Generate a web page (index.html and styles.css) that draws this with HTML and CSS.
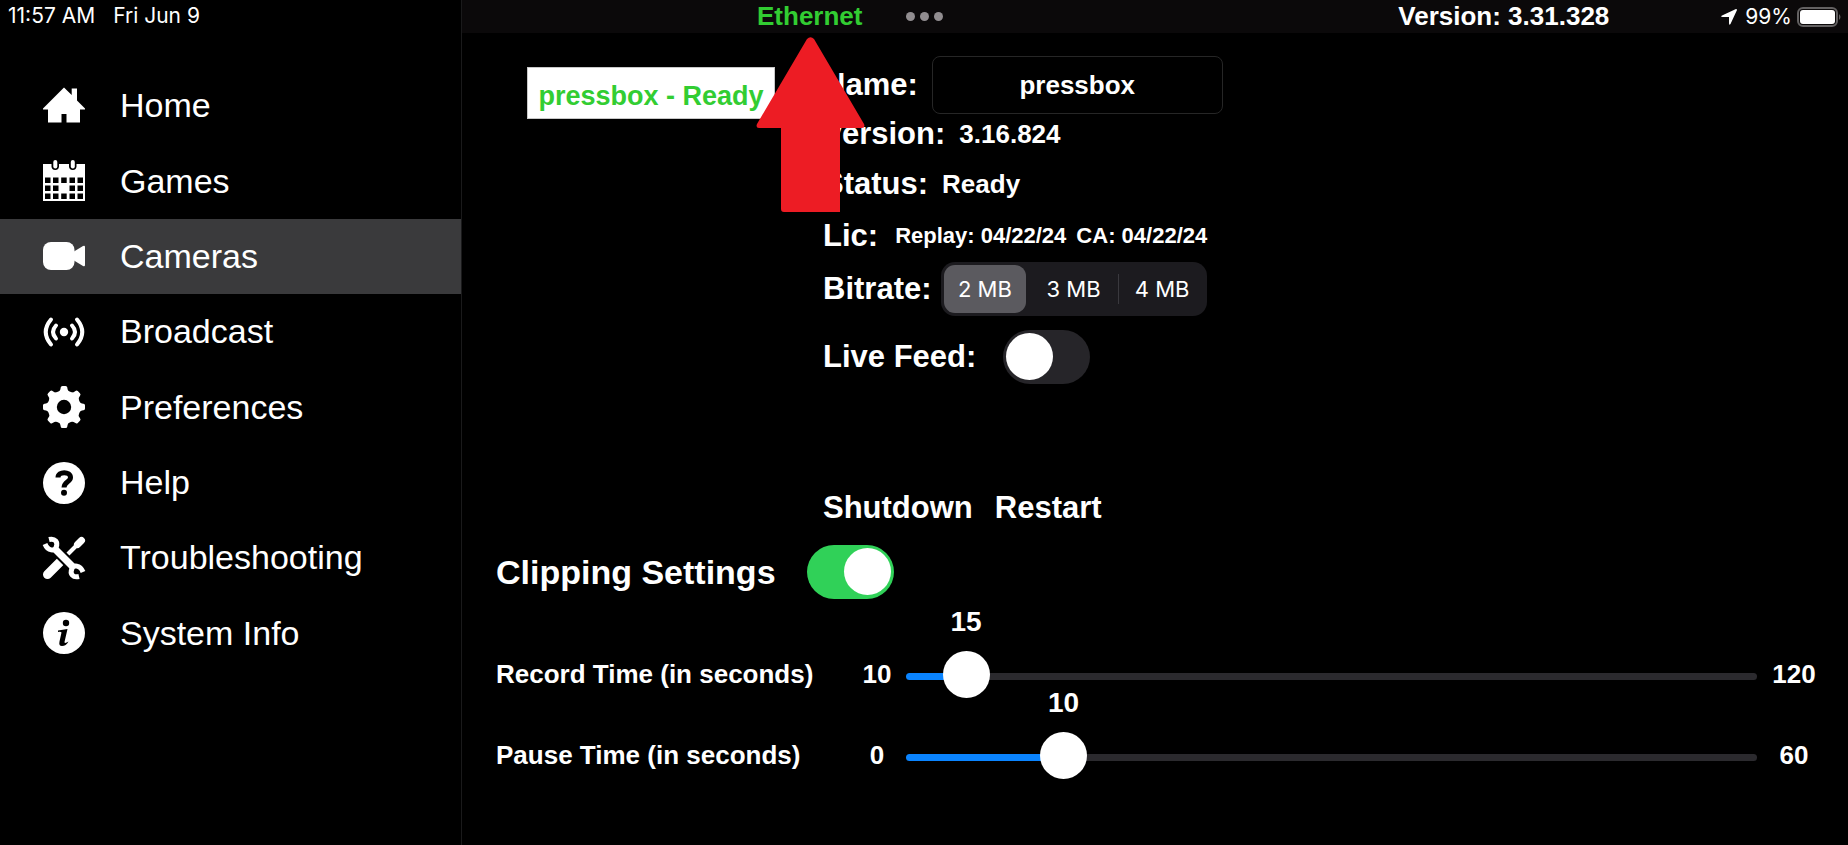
FILE: index.html
```html
<!DOCTYPE html>
<html lang="en">
<head>
    <meta charset="UTF-8">
    <meta name="viewport" content="width=device-width, initial-scale=1.0">
    <title>Cameras</title>
    <link rel="stylesheet" href="styles.css">
</head>
<body>
    <div class="app">
        <aside class="sidebar">
            <div class="clock"><span>11:57 AM</span><span>Fri Jun 9</span></div>
            <nav class="menu">
                <a href="#home">
                    <svg class="icon" viewBox="0 0 42 42"><path d="M21 2.500 28.700 10V3.500H34V15.500L42 23.500V24.500H37V37.500H23.500V29H18.500V37.500H5V24.500H0V23.500Z"/></svg>
                    Home
                </a>
                <a href="#games">
                    <svg class="icon" viewBox="0 0 42 42">
                        <rect y="4" width="42" height="37"/>
                        <path class="cut" d="M2 17.500h5.500V23H2zM10 17.500h5.500V23H10zM18.200 17.500h5.500V23h-5.500zM26.500 17.500H32V23h-5.500zM34.500 17.500H40V23h-5.500zM2 25.500h5.500V31H2zM10 25.500h5.500V31H10zM26.500 25.500H32V31h-5.500zM34.500 25.500H40V31h-5.500zM2 33.500h5.500V39H2zM10 33.500h5.500V39H10zM18.200 33.500h5.500V39h-5.500zM26.500 33.500H32V39h-5.500zM34.500 33.500H40V39h-5.500z"/>
                        <rect class="cut" x="8.500" y="-3" width="7.500" height="13" rx="3.700"/>
                        <rect class="cut" x="26" y="-3" width="7.500" height="13" rx="3.700"/>
                        <rect x="10.300" y="0" width="4" height="8.500" rx="2"/>
                        <rect x="27.800" y="0" width="4" height="8.500" rx="2"/>
                    </svg>
                    Games
                </a>
                <a href="#cameras" class="active">
                    <svg class="icon" viewBox="0 0 42 42"><rect y="7" width="31.500" height="28" rx="8"/><path d="M31 16.500 40 11Q42 10 42 12V30Q42 32 40 31L31 25.500Z"/></svg>
                    Cameras
                </a>
                <a href="#broadcast">
                    <svg class="icon" viewBox="0 0 42 42">
                        <circle cx="21" cy="21" r="4.200"/>
                        <g class="line"><path d="M13 14.500Q7 21 13 27.500M29 14.500Q35 21 29 27.500"/><path d="M8 8.500Q-2.500 21 8 33.500M34 8.500Q44.500 21 34 33.500"/></g>
                    </svg>
                    Broadcast
                </a>
                <a href="#preferences">
                    <svg class="icon" viewBox="0 0 42 42">
                        <circle cx="21" cy="21" r="16.500"/>
                        <path id="tooth" d="M14.500 6.500Q17.500 5 17.700 1.500Q17.800 0 19.500 0H22.500Q24.200 0 24.300 1.500Q24.500 5 27.500 6.500V35.500Q24.500 37 24.300 40.500Q24.200 42 22.500 42H19.500Q17.800 42 17.700 40.500Q17.500 37 14.500 35.500Z"/>
                        <use href="#tooth" transform="rotate(45 21 21)"/>
                        <use href="#tooth" transform="rotate(90 21 21)"/>
                        <use href="#tooth" transform="rotate(135 21 21)"/>
                        <circle class="cut" cx="21" cy="21" r="7.200"/>
                    </svg>
                    Preferences
                </a>
                <a href="#help">
                    <svg class="icon" viewBox="0 0 42 42">
                        <circle cx="21" cy="21" r="21"/>
                        <path class="mark" d="M15 15.500C15 9 27.500 9 27.500 15.500C27.500 20 21 19.500 21 25.500"/>
                        <circle class="cut" cx="21" cy="30.800" r="3"/>
                    </svg>
                    Help
                </a>
                <a href="#troubleshooting">
                    <svg class="icon" viewBox="0 0 42 42">
                        <path class="handle" d="M4.500 37.500 17 25"/>
                        <path class="shaft" d="M24 18 35 7"/>
                        <path class="tip" d="M34.500 7.500 38.500 3.500"/>
                        <path class="gap" d="M13 13 29 29"/>
                        <path class="wrench" d="M12 12 30 30"/>
                        <path class="jaw" d="M6 2.500C12 1 15.500 5 13 10.500 12 14 5 14.500 2 7"/>
                        <path class="jaw" d="M36 39.500C30 41 26.500 37 29 31.500 30 28 37 27.500 40 35"/>
                    </svg>
                    Troubleshooting
                </a>
                <a href="#system-info">
                    <svg class="icon" viewBox="0 0 42 42">
                        <circle cx="21" cy="21" r="21"/>
                        <circle class="cut" cx="23" cy="11" r="3.200"/>
                        <path class="cut" d="M15 18.500 24.500 17 21.500 30Q21.500 32 25.500 29.500Q23 34 19 34Q15.500 34 16.500 29.500L18.500 20.500Q18 19.500 15 20Z"/>
                    </svg>
                    System Info
                </a>
            </nav>
        </aside>

        <main class="main">
            <header class="topbar">
                <span class="network">Ethernet</span>
                <button class="dots" type="button" aria-label="More"><i></i><i></i><i></i></button>
                <span class="app-version">Version: 3.31.328</span>
                <div class="battery-status">
                    <svg class="location" viewBox="0 0 16 16"><path d="M15 0Q16 0 16 1L9.500 15Q8 17 8 14V8H1.500Q-1 8 1 6.500Z"/></svg>
                    <span>99%</span>
                    <svg class="battery" viewBox="0 0 46 20">
                        <rect class="shell" x="1" y="1" width="39" height="18" rx="5"/>
                        <rect x="3" y="3" width="35" height="14" rx="3"/>
                        <path class="nub" d="M42 7Q45 10 42 13Z"/>
                    </svg>
                </div>
            </header>

            <section class="device">
                <button class="device-item" type="button">pressbox - Ready</button>

                <div class="details">
                    <div class="field field-name">
                        <label for="name">Name:</label>
                        <input type="text" id="name" value="pressbox">
                    </div>
                    <div class="field field-version">
                        <span>Version:</span><span class="value">3.16.824</span>
                    </div>
                    <div class="field">
                        <span>Status:</span><span class="value">Ready</span>
                    </div>
                    <div class="field field-lic">
                        <span>Lic:</span>
                        <span class="dates"><span>Replay: 04/22/24</span><span>CA: 04/22/24</span></span>
                    </div>
                    <div class="field field-bitrate">
                        <span id="bitrate">Bitrate:</span>
                        <div class="segments" role="radiogroup" aria-labelledby="bitrate">
                            <label><input type="radio" name="bitrate" checked><span>2 MB</span></label>
                            <label><input type="radio" name="bitrate"><span>3 MB</span></label>
                            <label><input type="radio" name="bitrate"><span>4 MB</span></label>
                        </div>
                    </div>
                    <div class="field field-live">
                        <label for="live">Live Feed:</label>
                        <input type="checkbox" class="switch" id="live">
                    </div>
                    <div class="actions">
                        <button type="button">Shutdown</button>
                        <button type="button">Restart</button>
                    </div>
                </div>

                <!-- pointer to the connection type in the top bar -->
                <svg class="pointer" viewBox="0 0 110 176"><path d="M51 2Q54.500-1.500 58 2L108 87Q109.500 91 106 91H84V175H28Q25 175 25 172V91H3Q-.500 91 1 87Z"/></svg>
            </section>

            <section class="clipping">
                <div class="clipping-title">
                    <label for="clipping">Clipping Settings</label>
                    <input type="checkbox" class="switch" id="clipping" checked>
                </div>
                <div class="slider" style="--pos: 0.0455">
                    <div class="bubble"><output for="record">15</output></div>
                    <label for="record">Record Time (in seconds)</label>
                    <span class="limit">10</span>
                    <input type="range" id="record" min="10" max="120" value="15">
                    <span class="limit">120</span>
                </div>
                <div class="slider" style="--pos: 0.1667">
                    <div class="bubble"><output for="pause">10</output></div>
                    <label for="pause">Pause Time (in seconds)</label>
                    <span class="limit">0</span>
                    <input type="range" id="pause" min="0" max="60" value="10">
                    <span class="limit">60</span>
                </div>
            </section>
        </main>
    </div>

    <script>
        // keep the number above the thumb in step with the slider
        document.querySelectorAll('.slider').forEach(slider => {
            const range = slider.querySelector('input');
            range.addEventListener('input', () => {
                slider.querySelector('output').textContent = range.value;
                slider.style.setProperty('--pos', (range.value - range.min) / (range.max - range.min));
            });
        });
    </script>
</body>
</html>
```
FILE: styles.css
```css
* {
    box-sizing: border-box;
}
body {
    margin: 0;
    background-color: #000;
    color: #fff;
    font-family: "Liberation Sans", Arial, sans-serif;
}
button, input {
    font: inherit;
    color: inherit;
}
button {
    padding: 0;
    border: none;
    background: none;
}
.app {
    display: grid;
    grid-template-columns: 462px 1fr;
    min-height: 100vh;
}

/* sidebar */
.sidebar {
    border-right: 1px solid #1a1a1b;
}
.clock {
    display: flex;
    gap: 18px;
    height: 68px;
    padding-left: 8px;
    font-family: Inter, sans-serif;
    font-size: 21px;
    line-height: 32px;
}
.menu {
    display: grid;
    grid-auto-rows: 1fr;
    min-height: 603px;
}
.menu a {
    display: flex;
    align-items: center;
    gap: 35px;
    padding-left: 43px;
    color: #fff;
    font-size: 34px;
    text-decoration: none;
}
.menu .active {
    background-color: #3a3a3c;
}
.icon {
    width: 42px;
    height: 42px;
    fill: #fff;
    overflow: visible;
}
.icon .cut {
    fill: #000;
}
.icon .line {
    fill: none;
    stroke: #fff;
    stroke-width: 4;
    stroke-linecap: round;
}
.icon .mark {
    fill: none;
    stroke: #000;
    stroke-width: 5;
}
.icon .handle {
    stroke: #fff;
    stroke-width: 9;
    stroke-linecap: round;
}
.icon .shaft {
    stroke: #fff;
    stroke-width: 4;
}
.icon .tip {
    stroke: #fff;
    stroke-width: 7;
    stroke-linecap: round;
}
.icon .gap {
    stroke: #000;
    stroke-width: 11;
}
.icon .wrench {
    stroke: #fff;
    stroke-width: 7;
}
.icon .jaw {
    fill: none;
    stroke: #fff;
    stroke-width: 5;
}

/* top bar */
.topbar {
    display: flex;
    align-items: center;
    height: 33px;
    padding: 0 5px 0 295px;
    background-color: #0b090a;
    font-size: 26px;
    font-weight: bold;
}
.network {
    color: #32cd32;
}
.dots {
    display: flex;
    gap: 5px;
    margin-left: 44px;
}
.dots i {
    width: 9px;
    height: 9px;
    border-radius: 50%;
    background-color: #918d90;
}
.app-version {
    margin-left: auto;
}
.battery-status {
    display: flex;
    align-items: center;
    margin-left: 112px;
    font-family: Inter, sans-serif;
    font-size: 21px;
    font-weight: normal;
}
.location {
    width: 16px;
    height: 16px;
    margin-right: 8px;
    fill: #fff;
}
.battery {
    width: 46px;
    height: 20px;
    margin-left: 5px;
    fill: #fff;
}
.battery .shell {
    fill: none;
    stroke: #636162;
    stroke-width: 2;
}
.battery .nub {
    fill: #636162;
}

/* camera details */
.device {
    position: relative;
    display: flex;
    align-items: flex-start;
    gap: 48px;
    padding: 23px 20px 0 65px;
    font-weight: bold;
}
.device-item {
    width: 248px;
    margin-top: 11px;
    padding: 13px 0 7px;
    border: 1px solid #c8c8c8;
    background-color: #fff;
    color: #32cd32;
    font-size: 27px;
    line-height: 30px;
}
.field {
    display: flex;
    align-items: center;
    gap: 14px;
    min-height: 38px;
    margin-top: 12px;
    font-size: 31px;
}
.field-name {
    margin-top: 0;
}
.field-version {
    margin-top: 1px;
}
.field-name input {
    width: 291px;
    height: 58px;
    border: 1px solid #262626;
    border-radius: 8px;
    background: none;
    font-size: 26px;
    text-align: center;
}
.value {
    font-size: 26px;
}
.field-lic {
    gap: 17px;
    margin-top: 14px;
}
.dates {
    display: flex;
    gap: 10px;
    font-size: 22px;
}
.field-bitrate {
    gap: 9px;
    margin-top: 7px;
}
.segments {
    display: grid;
    grid-template-columns: repeat(3, 1fr);
    width: 266px;
    height: 54px;
    border-radius: 14px;
    background-color: #1c1b1f;
    font-family: Inter, sans-serif;
    font-size: 22px;
    font-weight: normal;
}
.segments label {
    display: grid;
    padding: 3px;
}
.segments input {
    appearance: none;
    grid-area: 1 / 1;
    margin: 0;
    border-radius: 11px;
}
.segments input:checked {
    background-color: #5b5a5f;
}
.segments span {
    grid-area: 1 / 1;
    place-self: center;
}
.segments label:last-child {
    background: linear-gradient(#3a393e, #3a393e) left center / 1px 30px no-repeat;
}
.field-live {
    gap: 27px;
    margin-top: 14px;
}
.switch {
    appearance: none;
    display: flex;
    width: 87px;
    height: 54px;
    margin: 0;
    padding: 3px;
    border-radius: 27px;
    background-color: #262529;
}
.switch::before {
    content: "";
    width: 47px;
    height: 47px;
    border-radius: 50%;
    background-color: #fff;
}
.switch:checked {
    justify-content: flex-end;
    background-color: #30d158;
}
.actions {
    display: flex;
    gap: 22px;
    margin-top: 105px;
    font-size: 31px;
    line-height: 38px;
}
.actions button {
    font-weight: bold;
}
.pointer {
    position: absolute;
    top: 4px;
    left: 294px;
    width: 110px;
    height: 176px;
    fill: #ed1c24;
}

/* clipping settings */
.clipping {
    padding: 18px 17px 0 34px;
    font-size: 26px;
    font-weight: bold;
}
.clipping-title {
    display: flex;
    align-items: center;
    gap: 31px;
    margin-bottom: 7px;
    font-size: 34px;
}
.slider {
    display: grid;
    grid-template-columns: 352px 58px 1fr 74px;
    row-gap: 23px;
    line-height: 26px;
}
.bubble {
    grid-column: 3;
    font-size: 28px;
    line-height: 32px;
}
.bubble output {
    display: block;
    width: 47px;
    margin-left: calc((100% - 47px) * var(--pos));
    text-align: center;
}
.slider label {
    grid-column: 1;
}
.limit {
    text-align: center;
}
.slider input {
    appearance: none;
    width: 100%;
    height: 26px;
    margin: 0;
    padding-top: 4px;
    background: none;
}
.slider input::-webkit-slider-runnable-track {
    height: 7px;
    border-radius: 4px;
    background: linear-gradient(to right, #0a84ff calc(100% * var(--pos)), #2b2a2e 0);
}
.slider input::-webkit-slider-thumb {
    appearance: none;
    width: 47px;
    height: 47px;
    margin-top: -22px;
    border-radius: 50%;
    background-color: #fff;
}
```
